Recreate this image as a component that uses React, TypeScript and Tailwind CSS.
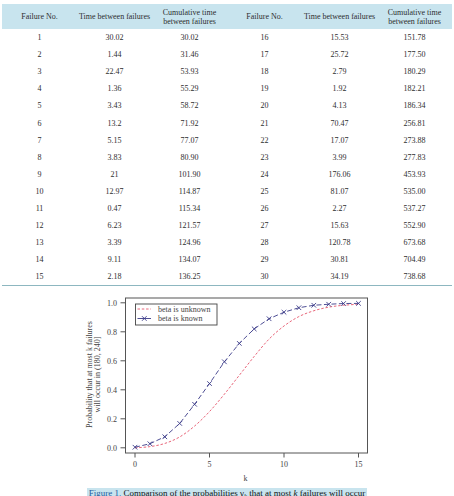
import React from "react";

const left: [string, string, string][] = [
  ["1", "30.02", "30.02"],
  ["2", "1.44", "31.46"],
  ["3", "22.47", "53.93"],
  ["4", "1.36", "55.29"],
  ["5", "3.43", "58.72"],
  ["6", "13.2", "71.92"],
  ["7", "5.15", "77.07"],
  ["8", "3.83", "80.90"],
  ["9", "21", "101.90"],
  ["10", "12.97", "114.87"],
  ["11", "0.47", "115.34"],
  ["12", "6.23", "121.57"],
  ["13", "3.39", "124.96"],
  ["14", "9.11", "134.07"],
  ["15", "2.18", "136.25"],
];
const right: [string, string, string][] = [
  ["16", "15.53", "151.78"],
  ["17", "25.72", "177.50"],
  ["18", "2.79", "180.29"],
  ["19", "1.92", "182.21"],
  ["20", "4.13", "186.34"],
  ["21", "70.47", "256.81"],
  ["22", "17.07", "273.88"],
  ["23", "3.99", "277.83"],
  ["24", "176.06", "453.93"],
  ["25", "81.07", "535.00"],
  ["26", "2.27", "537.27"],
  ["27", "15.63", "552.90"],
  ["28", "120.78", "673.68"],
  ["29", "30.81", "704.49"],
  ["30", "34.19", "738.68"],
];

const T = 286.5;
const X = (k: number) => 135 + k * 14.9;
const Y = (p: number) => 448.3 - p * 145 - T;

const red = [0.0, 0.008, 0.03, 0.075, 0.15, 0.25, 0.37, 0.5, 0.63, 0.75, 0.84, 0.905, 0.945, 0.97, 0.983, 0.99];
const blue = [0.004, 0.028, 0.076, 0.168, 0.3, 0.443, 0.593, 0.72, 0.82, 0.89, 0.935, 0.966, 0.983, 0.99, 0.995, 0.996];

function smooth(pts: [number, number][]) {
  let d = `M${pts[0][0]},${pts[0][1]}`;
  for (let i = 0; i < pts.length - 1; i++) {
    const p0 = pts[i - 1] || pts[i];
    const p1 = pts[i];
    const p2 = pts[i + 1];
    const p3 = pts[i + 2] || p2;
    const c1x = p1[0] + (p2[0] - p0[0]) / 6;
    const c1y = p1[1] + (p2[1] - p0[1]) / 6;
    const c2x = p2[0] - (p3[0] - p1[0]) / 6;
    const c2y = p2[1] - (p3[1] - p1[1]) / 6;
    d += ` C${c1x},${c1y} ${c2x},${c2y} ${p2[0]},${p2[1]}`;
  }
  return d;
}

const RED = "#e5556b";
const BLUE = "#3a3a88";
const AX = "#555";
const font = '"Liberation Serif", "Times New Roman", serif';

function Cross({ x, y }: { x: number; y: number }) {
  const s = 2.3;
  return (
    <g stroke={BLUE} strokeWidth={0.9}>
      <line x1={x - s} y1={y - s} x2={x + s} y2={y + s} />
      <line x1={x - s} y1={y + s} x2={x + s} y2={y - s} />
    </g>
  );
}

function Chart() {
  const redPts = red.map((p, k) => [X(k), Y(p)] as [number, number]);
  const bluePts = blue.map((p, k) => [X(k), Y(p)] as [number, number]);
  const top = 298.5 - T;
  const bottom = 453.5 - T;
  return (
    <svg width={454} height={201.5} className="block" style={{ fontFamily: font }}>
      <rect x={125.5} y={top} width={242} height={bottom - top} fill="none" stroke={AX} strokeWidth={1} />
      {[0, 0.2, 0.4, 0.6, 0.8, 1.0].map((p) => (
        <g key={p}>
          <line x1={120.5} y1={Y(p)} x2={125.5} y2={Y(p)} stroke={AX} strokeWidth={1} />
          <text x={117} y={Y(p) + 2.8} fontSize={8} fill="#444" textAnchor="end">
            {p.toFixed(1)}
          </text>
        </g>
      ))}
      {[0, 5, 10, 15].map((k) => (
        <g key={k}>
          <line x1={X(k)} y1={bottom} x2={X(k)} y2={bottom + 4.5} stroke={AX} strokeWidth={1} />
          <text x={X(k)} y={467 - T} fontSize={8} fill="#444" textAnchor="middle">
            {k}
          </text>
        </g>
      ))}
      <text x={245.5} y={481 - T} fontSize={8} fill="#444" textAnchor="middle">
        k
      </text>
      <text transform={`translate(91.6 ${375 - T}) rotate(-90)`} fontSize={8} fill="#444" textAnchor="middle">
        Probability that at most k failures
      </text>
      <text transform={`translate(100.2 ${375 - T}) rotate(-90)`} fontSize={8} fill="#444" textAnchor="middle">
        will occur in (180, 240]
      </text>
      <path d={smooth(redPts)} fill="none" stroke={RED} strokeWidth={0.9} strokeDasharray="2.5 1.8" />
      <path
        d={bluePts.map((p, i) => `${i ? "L" : "M"}${p[0]},${p[1]}`).join(" ")}
        fill="none"
        stroke={BLUE}
        strokeWidth={0.9}
        strokeDasharray="5 2.5"
      />
      {bluePts.map((p, i) => (
        <Cross key={i} x={p[0]} y={p[1]} />
      ))}
      <rect x={135.5} y={304.5 - T} width={81.5} height={21} fill="#fff" stroke="#444" strokeWidth={0.9} />
      <line x1={137.5} y1={309.5 - T} x2={151} y2={309.5 - T} stroke={RED} strokeWidth={0.9} strokeDasharray="2.5 1.8" />
      <text x={158} y={312.2 - T} fontSize={8} fill="#444">
        beta is unknown
      </text>
      <line x1={137.5} y1={319 - T} x2={151} y2={319 - T} stroke={BLUE} strokeWidth={0.9} />
      <Cross x={144.3} y={319 - T} />
      <text x={158} y={321.7 - T} fontSize={8} fill="#444">
        beta is known
      </text>
    </svg>
  );
}

function Row({ a, b }: { a: [string, string, string]; b: [string, string, string] }) {
  return (
    <div className="grid grid-cols-6 h-[17.1px] items-center text-center">
      {[...a, ...b].map((v, i) => (
        <div key={i}>{v}</div>
      ))}
    </div>
  );
}

export default function App() {
  const head = ["Failure No.", "Time between failures", "Cumulative time between failures"];
  return (
    <div className="w-[454px] h-[496px] overflow-hidden bg-white text-[#2e2e2e]" style={{ fontFamily: font }}>
      <div className="mx-[2px] mt-[4px] border-b border-[#8db7c0] text-[8px] leading-[9px]">
        <div className="grid grid-cols-6 h-[25px] items-center bg-[#c8e4ee] text-center">
          {[...head, ...head].map((h, i) => (
            <div key={i} className={i % 3 === 2 ? "px-[6px]" : ""}>
              {h}
            </div>
          ))}
        </div>
        {left.map((r, i) => (
          <Row key={i} a={r} b={right[i]} />
        ))}
      </div>
      <Chart />
      <div className="mx-auto w-fit bg-[#c8e4ee] px-[2px] text-[9px] leading-[11px] text-[#111] whitespace-nowrap">
        <span className="text-[#1f5c9e]">Figure 1.</span> Comparison of the probabilities γ<sub className="text-[6.5px]"><i>k</i></sub> that at most <i>k</i> failures will occur
      </div>
    </div>
  );
}
